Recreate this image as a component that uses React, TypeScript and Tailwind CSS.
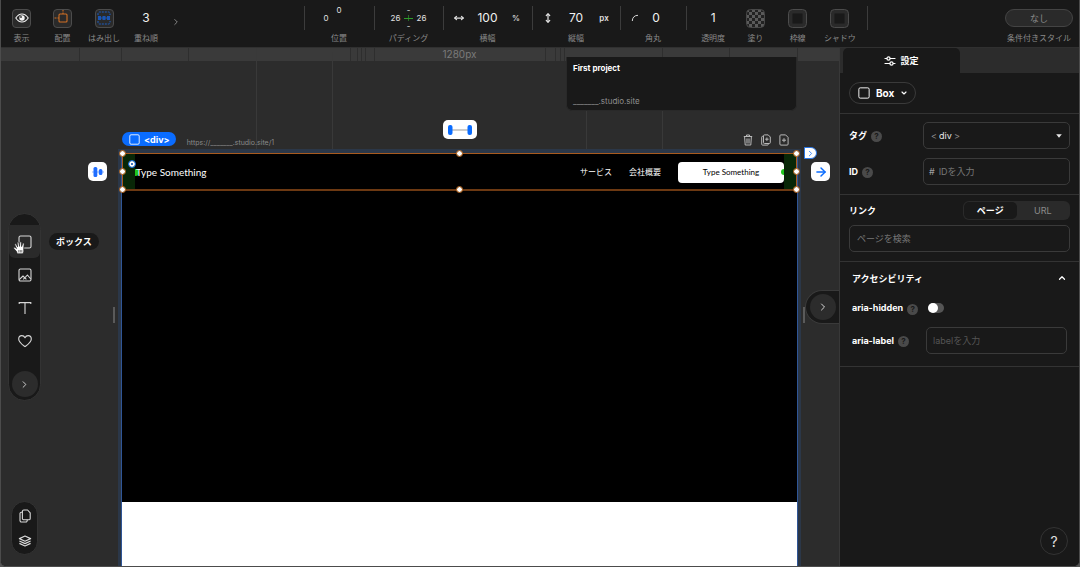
import { useState, type ReactNode } from "react"
import { ArrowRight, ChevronDown, ChevronRight, ChevronUp, MoveHorizontal, MoveVertical } from "lucide-react"

// ---------- Icons ----------

const BoxIcon = ({ className }: { className?: string }) => (
  <svg viewBox="0 0 14 14" fill="none" stroke="currentColor" strokeWidth="1.1" className={className}>
    <rect x="1" y="1" width="12" height="12" rx="1.6" />
  </svg>
)

const ImageIcon = () => (
  <svg viewBox="0 0 14 14" fill="none" stroke="currentColor" strokeWidth="1.1" strokeLinejoin="round" className="h-3.5 w-3.5">
    <rect x="1" y="1" width="12" height="12" rx="1.4" />
    <path d="M1.200 11.600 5 8l1.800 1.800L9.400 7l3.400 4M5.200 11.400l1.600-1.600 1.600 1.600" />
  </svg>
)

const TextIcon = () => (
  <svg viewBox="0 0 14 14" fill="none" stroke="currentColor" strokeWidth="1.1" className="h-3.5 w-3.5">
    <path d="M1.2 3V1.6h11.6V3M7 1.6V13" />
  </svg>
)

const HeartIcon = () => (
  <svg viewBox="0 0 14 14" fill="none" stroke="currentColor" strokeWidth="1.1" strokeLinejoin="round" className="h-3.5 w-3.5">
    <path d="M7 12.6C4.3 10.6.7 8.2.7 4.9.7 3 2.1 1.6 3.9 1.6 5.3 1.6 6.4 2.4 7 3.7 7.6 2.4 8.7 1.6 10.100 1.600c1.800 0 3.200 1.400 3.200 3.300 0 3.300-3.600 5.700-6.300 7.700Z" />
  </svg>
)

const PagesIcon = () => (
  <svg viewBox="0 0 12 14" fill="none" stroke="currentColor" strokeWidth="1.1" strokeLinejoin="round" className="h-3.5 w-3">
    <path d="M3.4 2.4a1.4 1.4 0 0 1 1.4-1.4h3.8l2.6 2.8v5.600a1.400 1.400 0 0 1-1.400 1.400h-5a1.400 1.400 0 0 1-1.400-1.400Z" />
    <path d="M3.2 3.2h-.8A1.400 1.400 0 0 0 1 4.600v7A1.400 1.400 0 0 0 2.400 13h4.400a1.400 1.400 0 0 0 1.400-1.400v-.8" />
  </svg>
)

const LayersIcon = () => (
  <svg viewBox="0 0 14 12" fill="none" stroke="currentColor" strokeWidth="1.2" strokeLinejoin="round" className="h-3 w-3.5">
    <path d="M7 1 12.6 3.600 7 6.200 1.400 3.600Z" />
    <path d="M1.400 6 7 8.600 12.600 6M1.400 8.400 7 11l5.600-2.600" />
  </svg>
)

const EyeIcon = () => (
  <svg viewBox="0 0 14 10" fill="none" stroke="#f2f2f2" className="h-2.5 w-3.5 shrink-0">
    <path d="M.8 5C2.400 2.500 4.500 1 7 1s4.600 1.500 6.200 4C11.600 7.500 9.500 9 7 9S2.400 7.500.8 5Z" strokeWidth="1.1" />
    <circle cx="7" cy="5" r="2.7" fill="#f2f2f2" stroke="none" />
    <circle cx="6" cy="4" r=".9" fill="#2a2a2a" stroke="none" />
  </svg>
)

const PlacementIcon = () => (
  <svg viewBox="0 0 18 18" fill="none" stroke="#d06f24" strokeWidth="1.1" className="h-[18px] w-[18px] shrink-0">
    <rect x="5" y="5" width="8" height="8" rx="1" />
    <path d="M9 .5v4.500M.5 9h4.500" strokeDasharray="2 1" />
  </svg>
)

const OverflowIcon = () => (
  <svg viewBox="0 0 14 14" fill="none" className="h-3.5 w-3.5 shrink-0">
    <path d="M1 4V2.400A1.400 1.400 0 0 1 2.400 1h9.200A1.400 1.400 0 0 1 13 2.400V4M1 10v1.600A1.400 1.400 0 0 0 2.400 13h9.200a1.400 1.400 0 0 0 1.400-1.400V10" stroke="#1c5fc4" strokeDasharray="2 1" />
    <path d="M1 5h3v4H1zM5.500 5h3v4h-3zM10 5h3v4h-3zM4 6.500h6v1H4z" fill="#1a55b4" />
  </svg>
)

const CheckerIcon = () => (
  <svg viewBox="0 0 19 19" className="h-[19px] w-[19px]">
    <defs>
      <pattern id="checker" width="6" height="6" patternUnits="userSpaceOnUse">
        <path d="M0 0h3v3H0zM3 3h3v3H3z" fill="#5a5a5a" />
      </pattern>
    </defs>
    <rect x=".5" y=".5" width="18" height="18" rx="4" fill="#222" />
    <rect x=".5" y=".5" width="18" height="18" rx="4" fill="url(#checker)" stroke="#484848" />
  </svg>
)

const FrameIcon = () => (
  <svg viewBox="0 0 19 19" className="h-[19px] w-[19px]">
    <rect x=".5" y=".5" width="18" height="18" rx="4" fill="#2a2a2a" stroke="#4c4c4c" />
    <rect x="4.5" y="4.5" width="10" height="10" rx="1" fill="#191919" stroke="#202020" />
  </svg>
)

const SlidersIcon = () => (
  <svg viewBox="0 0 12 10" fill="none" stroke="currentColor" strokeWidth="1.2" className="h-2.5 w-3">
    <path d="M1 2.500h1.800M6.200 2.500h4.800M1 7.500h4.800M9.200 7.500h1.800" strokeLinecap="round" />
    <circle cx="4.5" cy="2.5" r="1.6" />
    <circle cx="7.5" cy="7.5" r="1.6" />
  </svg>
)

const TrashIcon = () => (
  <svg viewBox="0 0 10 12" fill="none" stroke="currentColor" strokeWidth="1" className="h-3 w-2.5">
    <path d="M.8 2.500h8.400M3.500 2.300V1h3v1.300M1.600 2.800l.6 8.200h5.600l.6-8.200" />
    <path d="M3.800 4.500v5M5 4.500v5M6.200 4.500v5" strokeWidth=".8" />
  </svg>
)

const DuplicateIcon = () => (
  <svg viewBox="0 0 10 12" fill="none" stroke="currentColor" strokeWidth="1" className="h-3 w-2.5">
    <path d="M2.500 1.800A.9.9 0 0 1 3.400.9H7.200L9.300 3v5.600a.9.9 0 0 1-.9.9h-5a.9.9 0 0 1-.9-.9ZM2.300 2.300h-.7a.9.9 0 0 0-.9.9v7a.9.9 0 0 0 .9.9h4.800a.9.9 0 0 0 .9-.9v-.5" />
    <path d="M4.200 5.200h3.400M5.900 3.500v3.400" />
  </svg>
)

const AddPageIcon = () => (
  <svg viewBox="0 0 10 12" fill="none" stroke="currentColor" strokeWidth="1" className="h-3 w-2.5">
    <path d="M.9 1.900a1 1 0 0 1 1-1h4.700l2.500 2.500v6.700a1 1 0 0 1-1 1H1.900a1 1 0 0 1-1-1Z" />
    <path d="M3 6.200h4M5 4.200v4" />
  </svg>
)

const HandCursor = () => (
  <svg viewBox="0 0 14 14" className="pointer-events-none absolute top-4 left-1 h-3.5 w-3.5">
    <path
      d="M4.200 12.800 3.600 10.600.9 7.600c-.7-.9.4-1.800 1.300-1.100l1.300 1L1.900 3.900c-.3-1 1-1.500 1.500-.5l1.200 2.400-.4-4c0-1.200 1.400-1.200 1.600-.1l.7 3.700.4-3.900c.1-1 1.500-.9 1.600.1l.1 4 1-2.900c.4-1 1.700-.6 1.500.4L10.700 8l.1 2.200-.8 2.600Z"
      fill="#fff"
      stroke="#222"
      strokeWidth=".7"
    />
    <path d="M5.800 9v2.500M7.300 9v2.500M8.800 9v2.500" stroke="#222" strokeWidth=".6" />
  </svg>
)

// ---------- Top toolbar ----------

function ToolItem({ label, htmlFor, children }: { label: string; htmlFor?: string; children: ReactNode }) {
  return (
    <div className="flex flex-col items-center">
      <div className="flex h-6 w-full items-center justify-center">{children}</div>
      <label htmlFor={htmlFor} className="mt-0.5 h-3 text-[8px] leading-3 whitespace-nowrap text-[#8a8a8a]">
        {label}
      </label>
    </div>
  )
}

function IconButton({ id, children }: { id: string; children: ReactNode }) {
  return (
    <button id={id} className="flex h-[19px] w-[19px] items-center justify-center overflow-hidden rounded border border-[#4c4c4c] bg-[#2a2a2a]">
      {children}
    </button>
  )
}

function ToolGroup({ className, children }: { className: string; children: ReactNode }) {
  return (
    <div className={`relative shrink-0 before:absolute before:top-0 before:left-0 before:h-6 before:w-px before:bg-[#3c3c3c] ${className}`}>
      {children}
    </div>
  )
}

// Four tiny values laid out like a compass
function SideValues({ id, top, right, bottom, left, cross }: { id: string; top: string; right?: string; bottom?: string; left: string; cross?: boolean }) {
  const cell = "h-2 w-full bg-transparent text-center text-[8px] leading-none text-[#e0e0e0] outline-none"
  return (
    <div className="grid grid-cols-[13px_13px_13px] grid-rows-[8px_8px_8px] items-center">
      <span />
      <input id={id} aria-label={`${id}-top`} className={cell} defaultValue={top} />
      <span />
      <input aria-label={`${id}-left`} className={cell} defaultValue={left} />
      {cross ? (
        <svg viewBox="0 0 13 8" className="h-2 w-[13px]">
          <path d="M6.500 1v6" stroke="#256f24" />
          <path d="M2 4.500h9" stroke="#2e9b2a" />
        </svg>
      ) : (
        <span />
      )}
      {right ? <input aria-label={`${id}-right`} className={cell} defaultValue={right} /> : <span />}
      <span />
      {bottom && <input aria-label={`${id}-bottom`} className={cell} defaultValue={bottom} />}
    </div>
  )
}

const valueInput = "w-full min-w-0 bg-transparent text-center text-[12px] text-[#f0f0f0] outline-none"

function TopBar() {
  return (
    <header className="flex h-12 shrink-0 border-b border-[#303030] bg-[#191919] pt-[6px]">
      <div className="flex w-[303px] shrink-0">
        <div className="w-[41px]">
          <ToolItem label="表示" htmlFor="visible">
            <IconButton id="visible"><EyeIcon /></IconButton>
          </ToolItem>
        </div>
        <div className="w-[41px]">
          <ToolItem label="配置" htmlFor="placement">
            <IconButton id="placement"><PlacementIcon /></IconButton>
          </ToolItem>
        </div>
        <div className="w-[42px]">
          <ToolItem label="はみ出し" htmlFor="overflow">
            <IconButton id="overflow"><OverflowIcon /></IconButton>
          </ToolItem>
        </div>
        <div className="w-[42px]">
          <ToolItem label="重ね順" htmlFor="z-index">
            <input id="z-index" className={valueInput} defaultValue="3" />
          </ToolItem>
        </div>
        <button aria-label="次へ" className="flex h-8 w-[18px] items-center justify-center text-[#999]">
          <ChevronRight size={10} />
        </button>
      </div>

      <ToolGroup className="w-[70px]">
        <ToolItem label="位置" htmlFor="position">
          <SideValues id="position" top="0" left="0" />
        </ToolItem>
      </ToolGroup>
      <ToolGroup className="w-[69px]">
        <ToolItem label="パディング" htmlFor="padding">
          <SideValues id="padding" top="-" right="26" bottom="-" left="26" cross />
        </ToolItem>
      </ToolGroup>
      <ToolGroup className="w-[89px]">
        <ToolItem label="横幅" htmlFor="width">
          <div className="grid grid-cols-[32px_1fr_32px] place-items-center">
            <MoveHorizontal size={10} strokeWidth={3} color="#e0e0e0" />
            <input id="width" className={valueInput} defaultValue="100" />
            <span className="text-[8px] font-medium text-[#e0e0e0]">%</span>
          </div>
        </ToolItem>
      </ToolGroup>
      <ToolGroup className="w-[88px]">
        <ToolItem label="縦幅" htmlFor="height">
          <div className="grid grid-cols-[32px_1fr_32px] place-items-center">
            <MoveVertical size={10} strokeWidth={3} color="#e0e0e0" />
            <input id="height" className={valueInput} defaultValue="70" />
            <span className="text-[8px] font-semibold text-[#e0e0e0]">px</span>
          </div>
        </ToolItem>
      </ToolGroup>
      <ToolGroup className="w-[66px]">
        <ToolItem label="角丸" htmlFor="radius">
          <div className="grid grid-cols-[30px_12px_24px] place-items-center">
            <svg viewBox="0 0 8 8" fill="none" stroke="#d8d8d8" className="h-2 w-2">
              <path d="M1.300 7C1.300 3.500 3.500 1.300 7 1.300" />
            </svg>
            <input id="radius" className={valueInput} defaultValue="0" />
          </div>
        </ToolItem>
      </ToolGroup>
      <ToolGroup className="grid w-[181px] grid-cols-4 px-[6px]">
        <ToolItem label="透明度" htmlFor="opacity">
          <input id="opacity" className={valueInput} defaultValue="1" />
        </ToolItem>
        <ToolItem label="塗り" htmlFor="fill">
          <button id="fill"><CheckerIcon /></button>
        </ToolItem>
        <ToolItem label="枠線" htmlFor="stroke">
          <button id="stroke"><FrameIcon /></button>
        </ToolItem>
        <ToolItem label="シャドウ" htmlFor="shadow">
          <button id="shadow"><FrameIcon /></button>
        </ToolItem>
      </ToolGroup>
      <ToolGroup className="flex grow justify-end pr-[6px]">
        <div className="w-[68px]">
          <ToolItem label="条件付きスタイル" htmlFor="condition">
            <button id="condition" className="h-[18px] w-full rounded-full border border-[#444] bg-[#2a2a2a] text-[9px] leading-none text-[#8a8a8a]">
              なし
            </button>
          </ToolItem>
        </div>
      </ToolGroup>
    </header>
  )
}

// ---------- Canvas ----------

// Ruler ticks and the long guides running behind the artboard
const RulerLines = () => (
  <svg className="pointer-events-none absolute inset-0 h-full w-full" aria-hidden="true">
    <path
      d="M78.500 0v13M120.500 0v13M187.500 0v13M349.500 0v13M356.500 0v13M360.500 0v13M364.500 0v13M373.500 0v13M544.500 0v13M554.500 0v13M559.500 0v13M563.500 0v13M661.500 0v13M728.500 0v13M796.500 0v13"
      stroke="#2e2e2e"
    />
    <path d="M255.500 0v105M331.500 4v101M585.500 13v92M661.500 13v92" stroke="#393939" />
  </svg>
)

function LeftTools() {
  const tool = "flex h-[33px] w-full items-center justify-center"
  return (
    <div className="relative grid grid-rows-[1fr_auto_1fr] justify-items-start pl-[7px]">
      <nav aria-label="追加" className="row-start-2 w-[33px] rounded-full border border-[#333] bg-[#191919] pt-[11px] pb-[3px] text-[#d8d8d8]">
        <div className="relative">
          <button aria-label="ボックス" className={`${tool} rounded-b-md bg-[#2a2a2a]`}>
            <BoxIcon className="h-3.5 w-3.5" />
          </button>
          <HandCursor />
          <span className="absolute top-2 left-10 flex h-[17px] items-center rounded-full bg-[#191919] px-[7px] text-[9px] leading-none font-bold whitespace-nowrap text-white">
            ボックス
          </span>
        </div>
        <button aria-label="画像" className={tool}><ImageIcon /></button>
        <button aria-label="テキスト" className={tool}><TextIcon /></button>
        <button aria-label="アイコン" className={tool}><HeartIcon /></button>
        <button aria-label="もっと見る" className="mx-auto mt-[14px] flex h-[26px] w-[26px] items-center justify-center rounded-full bg-[#2c2c2c]">
          <ChevronRight size={11} />
        </button>
      </nav>
      <div className="row-start-3 mb-[11px] ml-[3px] flex w-[27px] flex-col items-center gap-3 self-end rounded-full border border-[#333] bg-[#191919] py-[7px] text-[#d8d8d8]">
        <button aria-label="ページ一覧"><PagesIcon /></button>
        <button aria-label="レイヤー"><LayersIcon /></button>
      </div>
      <span className="absolute top-1/2 right-[7px] h-4 w-0.5 bg-[#5a5a5a]" />
    </div>
  )
}

const handles = [
  "-top-[3px] -left-[3px]",
  "-top-[3px] left-1/2 -ml-[3px]",
  "-top-[3px] -right-[3px]",
  "top-1/2 -mt-[3px] -left-[3px]",
  "top-1/2 -mt-[3px] -right-[3px]",
  "-bottom-[3px] -left-[3px]",
  "-bottom-[3px] left-1/2 -ml-[3px]",
  "-bottom-[3px] -right-[3px]",
]

function SelectedHeader() {
  return (
    <div className="relative flex h-[38px] items-center justify-between border-x-[13px] border-[#082707] bg-black font-[Lato,'Noto_Sans_CJK_JP',sans-serif] text-white">
      <span className="absolute top-1/2 left-0 -mt-[3px] h-[7px] w-1 rounded-r-sm bg-[#1fc71b]" />
      <span className="relative pl-px text-[10px]">Type Something</span>
      <div className="relative flex items-center gap-[17px] text-[8px]">
        <a href="#service">サービス</a>
        <a href="#company">会社概要</a>
        <button className="h-[21px] w-[106px] rounded-sm bg-white text-black">Type Something</button>
        <span className="absolute top-1/2 right-0 -mt-[3px] h-[6px] w-[3px] rounded-l-full bg-[#1fc71b]" />
      </div>

      {/* Selection frame */}
      <div className="pointer-events-none absolute inset-y-0 -right-[13px] -left-[13px] border border-b-2 border-[#a85a1e] border-b-[#6d3912]">
        {handles.map((place) => (
          <span key={place} className={`absolute h-[5px] w-[5px] rounded-full bg-white outline-1 outline-[#c8762c] ${place}`} />
        ))}
        <span className="absolute top-[7px] left-[6px] h-[6px] w-[6px] rounded-full border-2 border-white bg-[#0a4aa8] outline-1 outline-[#1a73f0]" />
      </div>
      <button aria-label="幅を広げる" className="absolute -top-[33px] left-1/2 -ml-[17px] flex h-[19px] w-[34px] items-center justify-center rounded-[5px] bg-white">
        <svg viewBox="0 0 26 12" className="h-3 w-[26px]">
          <path d="M4 6h18" stroke="#999" />
          <rect x="1" y="1" width="4.5" height="10" rx="2" fill="#0a6cff" />
          <rect x="20.5" y="1" width="4.5" height="10" rx="2" fill="#0a6cff" />
        </svg>
      </button>
      <button aria-label="中央揃え" className="absolute top-[9px] -left-[47px] flex h-[19px] w-[19px] items-center justify-center rounded-[5px] bg-white">
        <svg viewBox="0 0 14 12" className="h-3 w-3.5">
          <path d="M1 6h12" stroke="#8db2f5" />
          <rect x="2.5" y="1" width="3.8" height="10" rx="1.5" fill="#1f6dff" />
          <rect x="7.8" y="3" width="3.6" height="6" rx="1.5" fill="#1f6dff" />
        </svg>
      </button>
      <button aria-label="横並び" className="absolute top-[9px] -right-[46px] flex h-[19px] w-[19px] items-center justify-center rounded-[5px] bg-white text-[#0a6cff]">
        <ArrowRight size={14} strokeWidth={2.5} />
      </button>
      <button aria-label="展開" className="absolute -top-[6px] -right-[33px] flex h-3 w-[13px] items-center justify-center rounded-l-[3px] rounded-r-full border border-[#2b78e8] bg-white text-[#0a6cff]">
        <ChevronRight size={9} className="shrink-0" />
      </button>
    </div>
  )
}

function Canvas() {
  return (
    <main className="relative flex min-w-0 flex-1 flex-col bg-[#2c2c2c]">
      <div className="absolute inset-x-0 top-0 h-[13px] bg-[#3a3a3a]" />
      <RulerLines />
      <div className="relative grid flex-1 grid-cols-[121px_1fr_42px]">
        <LeftTools />

        <div className="relative flex flex-col">
          <div className="h-[13px] text-center text-[10px] leading-[12px] text-[#7a7a7a]">1280px</div>
          <div className="flex h-[92px] items-end justify-between pb-[7px]">
            <div className="flex items-center">
              <button className="flex h-3.5 items-center gap-1 rounded-full bg-[#0a6cff] pr-[6px] pl-[7px] text-[9px] leading-none font-bold text-white">
                <BoxIcon className="h-[11px] w-[11px]" />
                &lt;div&gt;
              </button>
              <a href="#page" className="mt-[6px] ml-[11px] text-[7px] leading-none text-[#8a8a8a]">https://_______.studio.site/1</a>
            </div>
            <div className="flex gap-2 pr-2 text-[#b8b8b8]">
              <button aria-label="削除"><TrashIcon /></button>
              <button aria-label="複製"><DuplicateIcon /></button>
              <button aria-label="ページを追加"><AddPageIcon /></button>
            </div>
          </div>

          <div className="absolute top-[9px] right-0 flex h-[54px] w-[231px] flex-col justify-between rounded-b-md border border-t-0 border-[#292929] bg-[#191919] px-[6px] pt-[7px] pb-[5px] text-[8px] leading-none">
            <p className="font-bold text-white">First project</p>
            <p className="text-[#8f8f8f]">_______.studio.site</p>
          </div>

          <div className="flex flex-1 flex-col bg-white shadow-[-1px_1px_0_0_#2f5596,1px_1px_0_0_#2f5596,0_0_0_4px_#2b3748]">
            <SelectedHeader />
            <section className="h-[311px] bg-black" />
          </div>
        </div>

        <div className="relative flex items-center justify-end">
          <span className="absolute top-1/2 left-[6px] h-4 w-0.5 bg-[#5a5a5a]" />
          <button aria-label="パネルを開く" className="relative flex h-[34px] w-[34px] items-center justify-center rounded-l-full border border-r-0 border-[#3a3a3a] bg-[#191919] text-[#d8d8d8]">
            <span className="flex h-[26px] w-[26px] items-center justify-center rounded-full bg-[#2c2c2c]">
              <ChevronRight size={12} />
            </span>
          </button>
        </div>
      </div>
    </main>
  )
}

// ---------- Settings panel ----------

const HelpMark = () => (
  <button aria-label="ヘルプ" className="mt-0.5 h-[11px] w-[11px] rounded-full bg-[#4a4a4a] text-center text-[8px] leading-[11px] font-bold text-[#191919]">
    ?
  </button>
)

const field = "h-[27px] rounded-[5px] border border-[#3a3a3a] text-[9px]"

function SettingsPanel() {
  const [linkType, setLinkType] = useState("page")
  const [open, setOpen] = useState(true)
  const segment = "flex-1 rounded-[5px] leading-none"

  return (
    <aside className="relative w-[240px] shrink-0 border-l border-[#383838] bg-[#191919] text-[9px] text-white">
      <div className="flex h-[25px] bg-[#2c2c2c] pl-[3px]">
        <button className="flex w-[117px] items-center justify-center gap-1 rounded-t-[5px] bg-[#191919] font-bold">
          <SlidersIcon />
          設定
        </button>
      </div>

      <section className="border-b border-[#333] px-[9px] py-[9px]">
        <button className="flex h-[22px] items-center gap-[6px] rounded-full border border-[#3a3a3a] pr-[7px] pl-[8px] text-[10px] font-bold">
          <BoxIcon className="h-3 w-3" />
          Box
          <ChevronDown size={8} strokeWidth={3.5} />
        </button>
      </section>

      <section className="flex flex-col gap-[9px] border-b border-[#333] px-[9px] pt-[8px] pb-[9px]">
        <div className="flex items-center gap-1">
          <label htmlFor="tag" className="font-bold">タグ</label>
          <HelpMark />
          <div className={`${field} ml-auto flex w-[147px] items-center gap-0.5 px-[7px]`}>
            <span className="text-[#8a8a8a]">&lt;</span>
            <select id="tag" className="w-[13px] appearance-none bg-transparent text-[#e8e8e8] outline-none">
              <option>div</option>
            </select>
            <span className="text-[#8a8a8a]">&gt;</span>
            <svg viewBox="0 0 6 4" className="ml-auto h-1 w-[6px]">
              <path d="M.2.300h5.600L3 3.700Z" fill="#e8e8e8" />
            </svg>
          </div>
        </div>
        <div className="flex items-center gap-1">
          <label htmlFor="element-id" className="font-bold">ID</label>
          <HelpMark />
          <div className={`${field} ml-auto flex w-[147px] items-center gap-1 px-[5px]`}>
            <span className="text-[#a0a0a0]">#</span>
            <input id="element-id" placeholder="IDを入力" className="w-full min-w-0 bg-transparent outline-none placeholder:text-[#777]" />
          </div>
        </div>
      </section>

      <section className="border-b border-[#333] px-[9px] pt-[6px] pb-[9px]">
        <div className="flex items-center justify-between">
          <label htmlFor="link" className="font-bold">リンク</label>
          <div className="flex h-[19px] w-[107px] rounded-md bg-[#2a2a2a] p-px">
            <button onClick={() => setLinkType("page")} className={`${segment} ${linkType === "page" ? "bg-[#191919] font-bold text-white" : "text-[#8a8a8a]"}`}>
              ページ
            </button>
            <button onClick={() => setLinkType("url")} className={`${segment} ${linkType === "url" ? "bg-[#191919] font-bold text-white" : "text-[#8a8a8a]"}`}>
              URL
            </button>
          </div>
        </div>
        <input id="link" placeholder="ページを検索" className={`${field} mt-[5px] w-full px-[7px] outline-none placeholder:text-[#777]`} />
      </section>

      <section className="border-b border-[#333] px-3 pt-[10px] pb-3">
        <button onClick={() => setOpen(!open)} aria-expanded={open} className="flex h-3 w-full items-center justify-between leading-none font-bold">
          アクセシビリティ
          <ChevronUp size={10} strokeWidth={3} />
        </button>
        {open && (
          <>
            <div className="mt-[18px] flex h-3 items-center gap-1">
              <label htmlFor="aria-hidden" className="font-bold">aria-hidden</label>
              <HelpMark />
              <input
                id="aria-hidden"
                type="checkbox"
                role="switch"
                className="ml-[6px] h-[10px] w-4 appearance-none rounded-full bg-[#555] before:block before:h-[10px] before:w-[10px] before:rounded-full before:bg-white checked:bg-[#0a6cff] checked:before:ml-[6px]"
              />
            </div>
            <div className="mt-[13px] flex items-center gap-1">
              <label htmlFor="aria-label" className="font-bold">aria-label</label>
              <HelpMark />
              <input id="aria-label" placeholder="labelを入力" className={`${field} ml-auto w-[141px] px-[6px] outline-none placeholder:text-[#555]`} />
            </div>
          </>
        )}
      </section>

      <button aria-label="サポート" className="absolute right-[11px] bottom-[11px] h-7 w-7 rounded-full border border-[#333] text-[14px] text-[#e0e0e0]">
        ?
      </button>
    </aside>
  )
}

export default function App() {
  return (
    <div className="h-screen bg-[#555] font-[Inter,'Noto_Sans_CJK_JP',sans-serif]">
      <div className="flex h-full flex-col overflow-hidden rounded-b-md border-x border-b border-[#4c4c4c] bg-[#191919]">
        <TopBar />
        <div className="flex min-h-0 flex-1">
          <Canvas />
          <SettingsPanel />
        </div>
      </div>
    </div>
  )
}
